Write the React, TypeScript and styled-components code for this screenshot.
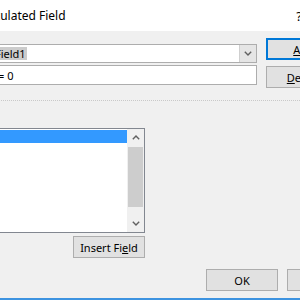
import React from "react";
import styled, { createGlobalStyle } from "styled-components";

const GlobalStyle = createGlobalStyle`
  html, body { margin: 0; padding: 0; width: 300px; height: 300px; overflow: hidden; background: #ffffff; }
  #root { width: 300px; height: 300px; overflow: hidden; }
`;

const Window = styled.div`
  width: 468px;
  height: 300px;
  margin-left: -100px;
  box-sizing: border-box;
  background: #f0f0f0;
  border-bottom: 2px solid #3d93e0;
  display: flex;
  flex-direction: column;
  font-family: "Segoe UI", "Noto Sans", sans-serif;
  font-size: 11px;
  color: #000000;
`;

const TitleBar = styled.div`
  height: 31px;
  flex: none;
  background: #ffffff;
  display: flex;
  align-items: center;
  padding-left: 77px;
  font-size: 12px;
`;

const Title = styled.div`
  flex: 1;
  white-space: nowrap;
`;

const CaptionButton = styled.div`
  width: 46px;
  height: 31px;
  display: flex;
  align-items: center;
  justify-content: center;
  font-size: 13px;
  color: #000;
`;

const Body = styled.div`
  flex: 1;
  display: flex;
  flex-direction: column;
  padding: 0 9px 0 12px;
`;

const TopSection = styled.div`
  display: flex;
  align-items: flex-start;
  gap: 9px;
`;

const FieldsGrid = styled.div`
  margin-top: 13px;
  display: grid;
  grid-template-columns: 80px 265px;
  row-gap: 2px;
  align-items: center;
`;

const Label = styled.div`
  white-space: nowrap;
`;

const Combo = styled.div`
  display: flex;
  height: 19px;
  box-sizing: border-box;
  border: 1px solid #adadad;
  background: #ffffff;
`;

const ComboText = styled.div`
  flex: 1;
  display: flex;
  align-items: center;
  padding-left: 2px;
  white-space: nowrap;
`;

const Selected = styled.span`
  background: #cccccc;
  line-height: 13px;
  padding-right: 1px;
`;

const ComboButton = styled.div`
  width: 16px;
  background: #e5e5e5;
  border-left: 1px solid #cfcfcf;
  display: flex;
  align-items: center;
  justify-content: center;
`;

const TextBox = styled.div`
  height: 20px;
  box-sizing: border-box;
  border: 1px solid #adadad;
  background: #ffffff;
  display: flex;
  align-items: center;
  padding-left: 5px;
  white-space: pre;
`;

const ButtonColumn = styled.div`
  margin-top: 7px;
  display: flex;
  flex-direction: column;
  gap: 6px;
`;

const Button = styled.button<{ $w: number; $default?: boolean }>`
  width: ${(p) => p.$w}px;
  height: 22px;
  box-sizing: border-box;
  padding: 0;
  background: #e1e1e1;
  border: ${(p) => (p.$default ? "2px solid #0078d7" : "1px solid #adadad")};
  font-family: inherit;
  font-size: 11px;
  color: #000000;
  display: flex;
  align-items: center;
  justify-content: center;
`;

const Separator = styled.div`
  margin: 12px -9px 0 -12px;
  border-top: 1px dotted #c9c9c9;
`;

const FieldsLabel = styled.div`
  margin-top: 9px;
  height: 15px;
  margin-bottom: 3px;
`;

const ListColumn = styled.div`
  width: 233px;
  display: flex;
  flex-direction: column;
  align-items: flex-end;
  gap: 3px;
`;

const ListBox = styled.div`
  width: 233px;
  height: 105px;
  box-sizing: border-box;
  border: 1px solid #828790;
  background: #ffffff;
  display: flex;
`;

const Items = styled.div`
  flex: 1;
  padding-top: 1px;
`;

const Item = styled.div<{ $selected?: boolean }>`
  height: 13px;
  line-height: 13px;
  overflow: hidden;
  padding-left: 2px;
  white-space: nowrap;
  background: ${(p) => (p.$selected ? "#3399ff" : "transparent")};
  color: ${(p) => (p.$selected ? "#ffffff" : "#000000")};
`;

const ScrollBar = styled.div`
  width: 17px;
  background: #f0f0f0;
  display: flex;
  flex-direction: column;
`;

const ScrollArrow = styled.div`
  height: 17px;
  display: flex;
  align-items: center;
  justify-content: center;
`;

const ScrollTrack = styled.div`
  flex: 1;
  padding: 1px;
`;

const Thumb = styled.div`
  height: 60px;
  background: #cdcdcd;
`;

const BottomRow = styled.div`
  margin-top: 11px;
  display: flex;
  justify-content: flex-end;
  gap: 9px;
`;

const U = styled.span`
  text-decoration: underline;
`;

const Chevron = ({ up }: { up?: boolean }) => (
  <svg width="8" height="5" viewBox="0 0 8 5">
    <path
      d={up ? "M0.8 4.2 L4 1 L7.2 4.2" : "M0.8 0.8 L4 4 L7.2 0.8"}
      fill="none"
      stroke="#606060"
      strokeWidth="1.4"
    />
  </svg>
);

export default function App() {
  return (
    <>
      <GlobalStyle />
      <Window>
        <TitleBar>
          <Title>Calculated Field</Title>
          <CaptionButton>?</CaptionButton>
          <CaptionButton>✕</CaptionButton>
        </TitleBar>
        <Body>
          <TopSection>
            <FieldsGrid>
              <Label>Name:</Label>
              <Combo>
                <ComboText>
                  <Selected>Field1</Selected>
                </ComboText>
                <ComboButton>
                  <Chevron />
                </ComboButton>
              </Combo>
              <Label>Formula:</Label>
              <TextBox>{"= 0"}</TextBox>
            </FieldsGrid>
            <ButtonColumn>
              <Button $w={75} $default>
                <U>A</U>dd
              </Button>
              <Button $w={75}>
                <U>D</U>elete
              </Button>
            </ButtonColumn>
          </TopSection>
          <Separator />
          <FieldsLabel>Fields:</FieldsLabel>
          <ListColumn>
            <ListBox>
              <Items>
                <Item $selected>Region</Item>
                <Item>Product</Item>
                <Item>Units</Item>
                <Item>Sales</Item>
              </Items>
              <ScrollBar>
                <ScrollArrow>
                  <Chevron up />
                </ScrollArrow>
                <ScrollTrack>
                  <Thumb />
                </ScrollTrack>
                <ScrollArrow>
                  <Chevron />
                </ScrollArrow>
              </ScrollBar>
            </ListBox>
            <Button $w={72}>
              Insert Fi<U>e</U>ld
            </Button>
          </ListColumn>
          <BottomRow>
            <Button $w={72}>OK</Button>
            <Button $w={72}>Close</Button>
          </BottomRow>
        </Body>
      </Window>
    </>
  );
}
